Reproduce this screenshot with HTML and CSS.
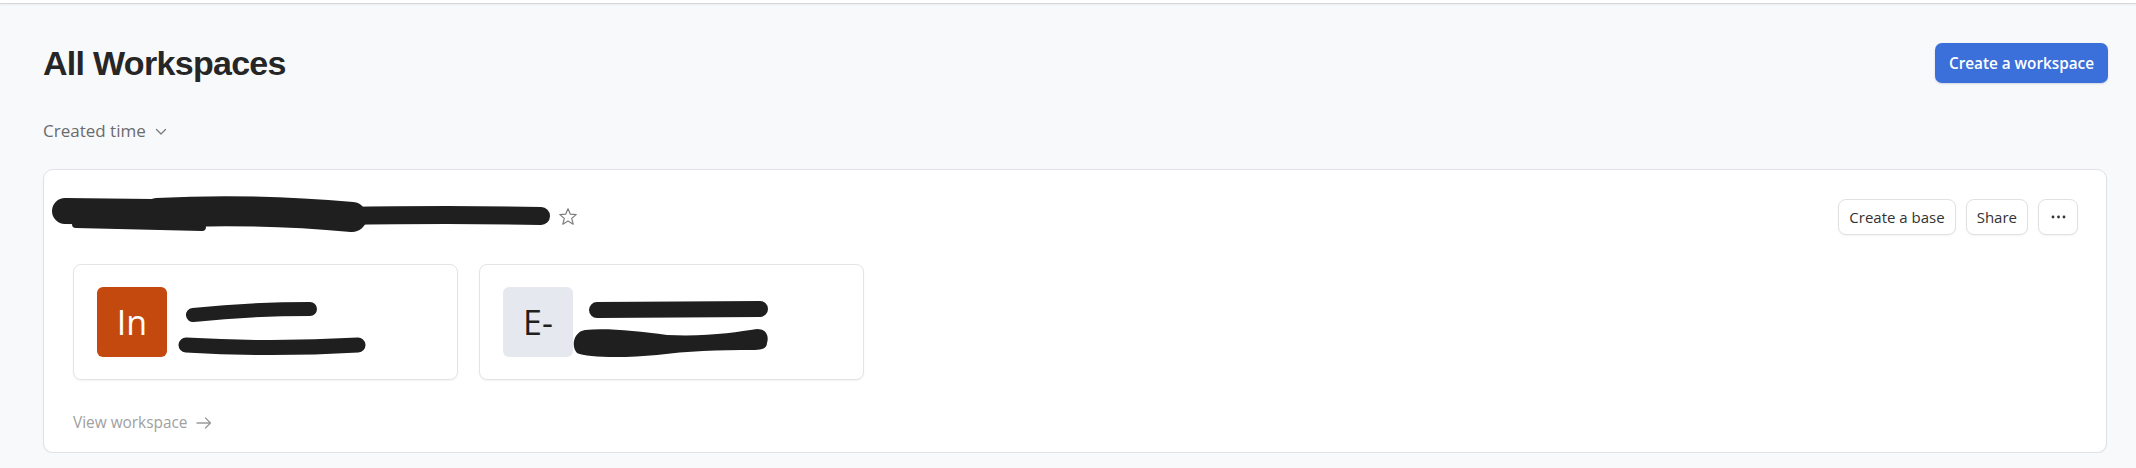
FILE: index.html
```html
<!DOCTYPE html>
<html lang="en">
<head>
<meta charset="utf-8">
<title>All Workspaces</title>
<link rel="stylesheet" href="styles.css">
</head>
<body>
<div class="topbar"></div>
<main class="page">
  <header class="page-head">
    <h1 class="title">All Workspaces</h1>
    <button class="btn-primary">Create a workspace</button>
  </header>
  <div class="sort">
    <span>Created time</span>
    <svg class="chev" width="12" height="8" viewBox="0 0 12 8"><path d="M1.5 1.5 L6 6 L10.5 1.5" fill="none" stroke="#7a7a7a" stroke-width="1.3" stroke-linecap="round" stroke-linejoin="round"/></svg>
  </div>

  <section class="ws-card">
    <div class="ws-head">
      <div class="ws-name">
        <svg class="redact-title" width="500" height="40" viewBox="0 0 500 40">
          <g fill="none" stroke="#1f1f1f" stroke-linecap="round">
            <path d="M13 16 L100 17" stroke-width="26"/>
            <path d="M24 29 L150 32" stroke-width="8"/>
            <path d="M105 18 Q200 13 300 22" stroke-width="30"/>
            <path d="M290 21 Q400 19 489 21" stroke-width="18"/>
          </g>
        </svg>
        <svg class="star" width="20" height="20" viewBox="0 0 20 20"><path d="M10 1.8 L12.4 7.2 L18.2 7.6 L13.7 11.4 L15.2 17.2 L10 14 L4.8 17.2 L6.3 11.4 L1.8 7.6 L7.6 7.2 Z" fill="none" stroke="#7d7d7d" stroke-width="1.2" stroke-linejoin="round"/></svg>
      </div>
      <div class="ws-actions">
        <button class="btn">Create a base</button>
        <button class="btn">Share</button>
        <button class="btn btn-more" aria-label="More">
          <svg width="15" height="4" viewBox="0 0 15 4"><circle cx="2" cy="2" r="1.4" fill="#333"/><circle cx="7.5" cy="2" r="1.4" fill="#333"/><circle cx="13" cy="2" r="1.4" fill="#333"/></svg>
        </button>
      </div>
    </div>

    <div class="bases">
      <div class="base">
        <div class="avatar avatar-orange">In</div>
        <svg class="redact" width="200" height="70" viewBox="0 0 200 70">
          <g fill="none" stroke="#1f1f1f" stroke-linecap="round">
            <path d="M22 28 Q80 22 139 22" stroke-width="14"/>
            <path d="M15 58 Q100 63 187 58" stroke-width="15"/>
          </g>
        </svg>
      </div>
      <div class="base">
        <div class="avatar avatar-grey">E-</div>
        <svg class="redact" width="200" height="70" viewBox="0 0 200 70">
          <path d="M20 23 L183 22" fill="none" stroke="#1f1f1f" stroke-width="16" stroke-linecap="round"/>
          <path d="M8 43 C30 41 60 44 90 48 C130 50 160 45 180 42 C190 42 192 50 190 56 C190 62 184 63 178 63 C140 63 110 64 80 68 C50 71 10 71 0 66 C-6 60 -4 45 8 43 Z" fill="#1f1f1f"/>
        </svg>
      </div>
    </div>

    <a class="view-link" href="#">View workspace
      <svg width="16" height="12" viewBox="0 0 16 12"><path d="M1 6 H14.5 M9.5 1 L14.5 6 L9.5 11" fill="none" stroke="#9a9a9a" stroke-width="1.3" stroke-linecap="round" stroke-linejoin="round"/></svg>
    </a>
  </section>
</main>
</body>
</html>
```

FILE: styles.css
```css
* { box-sizing: border-box; }

html, body {
  margin: 0;
  padding: 0;
  background: #f8f9fb;
  font-family: "Open Sans", "Noto Sans", sans-serif;
  color: #333;
}

.topbar {
  height: 4px;
  background: #ffffff;
  border-bottom: 1px solid #d8d8d8;
  box-shadow: 0 1px 2px rgba(0, 0, 0, 0.05);
}

.page {
  padding: 39px 29px 0 43px;
}

.page-head {
  display: flex;
  align-items: center;
  justify-content: space-between;
  height: 40px;
}

.title {
  margin: 0;
  font-family: "Liberation Sans", Arial, sans-serif;
  font-weight: 700;
  font-size: 34px;
  line-height: 40px;
  letter-spacing: -0.7px;
  color: #262626;
}

.btn-primary {
  height: 40px;
  width: 173px;
  margin-right: -1px;
  border: none;
  border-radius: 7px;
  background: #3b6fd9;
  color: #ffffff;
  font-family: "Open Sans", sans-serif;
  font-weight: 600;
  font-size: 15.3px;
  padding: 0;
  box-shadow: 0 1px 2px rgba(40, 70, 140, 0.2);
}

.sort {
  margin-top: 36px;
  height: 24px;
  display: flex;
  align-items: center;
  gap: 9px;
  font-size: 17px;
  line-height: 24px;
  color: #6b6b6b;
}

.chev { margin-top: 1px; }

.ws-card {
  margin-top: 26px;
  background: #ffffff;
  border: 1px solid #e1e2e5;
  border-radius: 10px;
  box-shadow: 0 1px 2px rgba(0, 0, 0, 0.05);
  padding: 29px 28px 18px 29px;
}

.ws-head {
  display: flex;
  align-items: center;
  justify-content: space-between;
  height: 36px;
}

.ws-name {
  display: flex;
  align-items: center;
  gap: 6px;
  margin-left: -21px;
}

.redact-title { display: block; margin-top: -4px; }

.star { display: block; }

.ws-actions {
  display: flex;
  gap: 10px;
}

.btn {
  height: 36px;
  padding: 0 10px;
  background: #ffffff;
  border: 1px solid #e0e1e4;
  border-radius: 8px;
  font-family: "Open Sans", sans-serif;
  font-size: 15px;
  color: #333;
  box-shadow: 0 1px 2px rgba(0, 0, 0, 0.05);
}

.btn-more {
  width: 40px;
  padding: 0;
  display: flex;
  align-items: center;
  justify-content: center;
}

.bases {
  margin-top: 29px;
  display: flex;
  gap: 21px;
}

.base {
  width: 385px;
  height: 116px;
  background: #ffffff;
  border: 1px solid #e2e4e8;
  border-radius: 8px;
  box-shadow: 0 1px 2px rgba(0, 0, 0, 0.05);
  padding: 22px 23px;
  display: flex;
  align-items: flex-start;
  gap: 4px;
}

.avatar {
  flex: none;
  width: 70px;
  height: 70px;
  border-radius: 6px;
  display: flex;
  align-items: center;
  justify-content: center;
  font-family: "Open Sans", sans-serif;
  font-size: 34px;
  line-height: 1;
}

.avatar-orange {
  background: #c4490f;
  color: #ffffff;
}

.avatar-grey {
  background: #e5e8ef;
  color: #1f1f1f;
}

.redact { display: block; overflow: visible; }

.view-link {
  margin-top: 32px;
  display: inline-flex;
  align-items: center;
  gap: 8px;
  height: 22px;
  font-size: 15.4px;
  line-height: 22px;
  color: #a0a0a0;
  text-decoration: none;
}
```
